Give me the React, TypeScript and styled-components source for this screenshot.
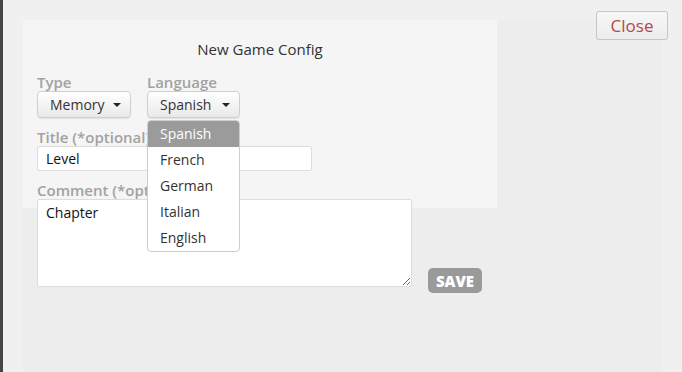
import React, { useState } from 'react';
import styled, { createGlobalStyle } from 'styled-components';

const GlobalStyle = createGlobalStyle`
  html, body {
    margin: 0;
    padding: 0;
    height: 100%;
  }
  body {
    font-family: "Open Sans", "Liberation Sans", sans-serif;
    background: #f0f0f0;
    overflow: hidden;
  }
  #root {
    height: 100%;
  }
`;

const Page = styled.div`
  position: relative;
  height: 372px;
  border-left: 3px solid #464646;
  padding: 20px 20px 0 20px;
  box-sizing: border-box;
`;

const Stage = styled.div`
  height: 100%;
  background: #ededed;
`;

const Panel = styled.div`
  width: 474px;
  height: 188px;
  box-sizing: border-box;
  background: #f5f5f5;
  padding: 19px 14px 0 14px;
`;

const Heading = styled.div`
  text-align: center;
  font-size: 15px;
  line-height: 20px;
  color: #333;
  margin-bottom: 14px;
`;

const Row = styled.div`
  display: flex;
  gap: 16px;
`;

const Field = styled.div`
  position: relative;
  display: flex;
  flex-direction: column;
`;

const Label = styled.div`
  font-size: 15px;
  font-weight: 600;
  line-height: 18px;
  color: #a2a2a2;
  white-space: nowrap;
`;

const SelectButton = styled.button<{ $width: number }>`
  display: flex;
  align-items: center;
  justify-content: space-between;
  width: ${(p) => p.$width}px;
  height: 27px;
  padding: 0 9px 0 12px;
  box-sizing: border-box;
  border: 1px solid #cfcfcf;
  border-radius: 4px;
  background: linear-gradient(#ffffff, #e9e9e9);
  font-family: inherit;
  font-size: 14px;
  color: #333;
  box-shadow: 0 1px 1px rgba(0, 0, 0, 0.08);
`;

const Caret = styled.span`
  width: 0;
  height: 0;
  border-left: 4px solid transparent;
  border-right: 4px solid transparent;
  border-top: 4px solid #222;
`;

const Menu = styled.ul`
  position: absolute;
  top: 47px;
  left: 0;
  width: 91px;
  margin: 0;
  padding: 0;
  list-style: none;
  background: #fff;
  border: 1px solid #cdcdcd;
  border-radius: 4px;
  overflow: hidden;
  z-index: 5;
`;

const MenuItem = styled.li<{ $active?: boolean }>`
  height: 26px;
  line-height: 26px;
  padding-left: 12px;
  font-size: 14px;
  color: ${(p) => (p.$active ? '#fff' : '#333')};
  background: ${(p) => (p.$active ? '#9b9b9b' : 'transparent')};
`;

const Block = styled.div`
  margin-top: 10px;
  display: flex;
  flex-direction: column;
`;

const TextInput = styled.input`
  width: 275px;
  height: 25px;
  box-sizing: border-box;
  border: 1px solid #ddd;
  border-radius: 2px;
  padding: 0 8px;
  font-family: inherit;
  font-size: 14px;
  font-weight: 500;
  color: #111;
  background: #fff;
  outline: none;
`;

const AreaRow = styled.div`
  display: flex;
  align-items: flex-start;
  gap: 16px;
`;

const TextArea = styled.textarea`
  width: 375px;
  height: 88px;
  box-sizing: border-box;
  border: 1px solid #dcdcdc;
  border-radius: 2px;
  padding: 3px 8px;
  font-family: inherit;
  font-size: 14px;
  font-weight: 500;
  color: #111;
  background: #fff;
  outline: none;
`;

const SaveButton = styled.button`
  margin-top: 69px;
  width: 54px;
  height: 25px;
  border: none;
  border-radius: 5px;
  background: #9a9a9a;
  color: #fff;
  font-family: inherit;
  font-size: 15px;
  font-weight: 800;
  padding: 0;
`;

const CloseButton = styled.button`
  position: absolute;
  top: 11px;
  right: 14px;
  width: 72px;
  height: 29px;
  border: 1px solid #c6c6c6;
  border-radius: 3px;
  background: linear-gradient(#f7f7f7, #ececec);
  color: #b5474a;
  font-family: inherit;
  font-size: 17px;
  padding: 0;
`;

const languages = ['Spanish', 'French', 'German', 'Italian', 'English'];

export default function App() {
  const [language, setLanguage] = useState('Spanish');
  const [title, setTitle] = useState('Level');
  const [comment, setComment] = useState('Chapter');

  return (
    <>
      <GlobalStyle />
      <Page>
        <Stage>
          <Panel>
            <Heading>New Game Config</Heading>
            <Row>
              <Field>
                <Label>Type</Label>
                <SelectButton $width={94}>
                  Memory <Caret />
                </SelectButton>
              </Field>
              <Field>
                <Label>Language</Label>
                <SelectButton $width={93}>
                  {language} <Caret />
                </SelectButton>
                <Menu>
                  {languages.map((l) => (
                    <MenuItem key={l} $active={l === language} onClick={() => setLanguage(l)}>
                      {l}
                    </MenuItem>
                  ))}
                </Menu>
              </Field>
            </Row>
            <Block>
              <Label>Title (*optional)</Label>
              <TextInput value={title} onChange={(e) => setTitle(e.target.value)} />
            </Block>
            <Block>
              <Label>Comment (*optional)</Label>
              <AreaRow>
                <TextArea value={comment} onChange={(e) => setComment(e.target.value)} />
                <SaveButton>SAVE</SaveButton>
              </AreaRow>
            </Block>
          </Panel>
        </Stage>
        <CloseButton>Close</CloseButton>
      </Page>
    </>
  );
}
